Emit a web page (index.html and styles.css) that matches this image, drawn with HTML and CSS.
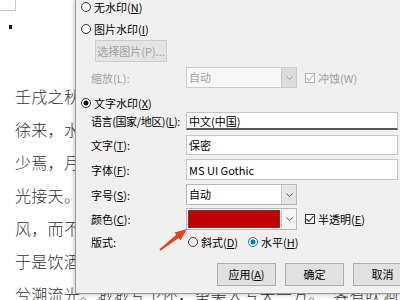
FILE: index.html
```html
<!DOCTYPE html>
<html lang="zh">
<head>
    <meta charset="UTF-8">
    <title>水印</title>
    <link rel="stylesheet" href="styles.css">
</head>
<body>
    <div class="corner"></div>
    <div class="bullet"></div>
    <div class="doc">
        <p>壬戌之秋，七月既望，苏子与客泛舟游于赤壁之下。清</p>
        <p>徐来，水波不兴。举酒属客，诵明月之诗，歌窈窕之章。</p>
        <p>少焉，月出于东山之上，徘徊于斗牛之间。白露横江，水</p>
        <p>光接天。纵一苇之所如，凌万顷之茫然。浩浩乎如冯虚御</p>
        <p>风，而不知其所止；飘飘乎如遗世独立，羽化而登仙。</p>
        <p>于是饮酒乐甚，扣舷而歌之。歌曰：“桂棹兮兰桨，击空明</p>
        <p>兮溯流光。渺渺兮予怀，望美人兮天一方。”客有吹洞箫者</p>
    </div>

    <div class="dialog">
        <div class="row opt r-none"><span class="radio"></span>无水印(<u>N</u>)</div>
        <div class="row opt r-pic"><span class="radio"></span>图片水印(<u>I</u>)</div>
        <div class="pic-btn">选择图片(P)...</div>
        <div class="row field r-scale">
            <span class="label off">缩放(L):</span>
            <span class="combo off">
                <span class="combo-val">自动</span>
                <span class="combo-drop"><svg width="7" height="4"><polyline points="0.5,0.5 3.5,3.5 6.5,0.5" fill="none" stroke="#9a9a9a"/></svg></span>
            </span>
            <span class="check off"><svg width="8" height="8"><polyline points="0.5,4 3,6.5 7.5,1" fill="none" stroke="#b0b0b0" stroke-width="1.1"/></svg></span>
            <span class="off">冲蚀(W)</span>
        </div>
        <div class="row opt r-text"><span class="radio on"></span>文字水印(<u>X</u>)</div>
        <div class="row field r-lang">
            <span class="label tight">语言(国家/地区)(<u>L</u>):</span>
            <span class="input lang">中文(中国)</span>
        </div>
        <div class="row field r-word">
            <span class="label">文字(<u>T</u>):</span>
            <span class="input">保密</span>
        </div>
        <div class="row field r-font">
            <span class="label">字体(<u>F</u>):</span>
            <span class="input">MS UI Gothic</span>
        </div>
        <div class="row field r-size">
            <span class="label">字号(<u>S</u>):</span>
            <span class="combo">
                <span class="combo-val">自动</span>
                <span class="combo-drop"><svg width="7" height="4"><polyline points="0.5,0.5 3.5,3.5 6.5,0.5" fill="none" stroke="#555"/></svg></span>
            </span>
        </div>
        <div class="row field r-color">
            <span class="label">颜色(<u>C</u>):</span>
            <span class="combo color">
                <span class="combo-val"></span>
                <span class="combo-drop"><svg width="7" height="4"><polyline points="0.5,0.5 3.5,3.5 6.5,0.5" fill="none" stroke="#555"/></svg></span>
            </span>
            <span class="check"><svg width="8" height="8"><polyline points="0.5,4 3,6.5 7.5,1" fill="none" stroke="#222" stroke-width="1.1"/></svg></span>
            <span>半透明(<u>E</u>)</span>
        </div>
        <div class="row field r-layout">
            <span class="label">版式:</span>
            <span class="radio r-first"></span><span>斜式(<u>D</u>)</span>
            <span class="radio on blue r-second"></span><span>水平(<u>H</u>)</span>
        </div>
        <div class="buttons">
            <span class="btn">应用(<u>A</u>)</span>
            <span class="btn">确定</span>
            <span class="btn">取消</span>
        </div>
    </div>

    <svg class="arrow" width="40" height="32" viewBox="155 224 40 32">
        <polygon points="187,229 180.6,240.3 178.7,238 160.4,250.8 159.4,249.2 176.3,234.8 174.4,232.4" fill="#e8431f"/>
    </svg>
</body>
</html>
```

FILE: styles.css
```css
body {
    margin: 0;
    width: 400px;
    height: 300px;
    overflow: hidden;
    background: #fff;
    position: relative;
    font-family: "Noto Sans CJK SC", "Noto Sans", sans-serif;
}

.corner {
    width: 15px;
    height: 10px;
    border-right: 1px solid #c8c8c8;
    border-bottom: 1px solid #c8c8c8;
}

.bullet {
    width: 3px;
    height: 4px;
    background: #111;
    margin: 14px 0 0 9px;
}

.doc {
    margin-top: 51px;
    padding-left: 15px;
    font-size: 16px;
    line-height: 33px;
    letter-spacing: 0.3px;
    color: #333;
    font-weight: 300;
    white-space: nowrap;
}

.doc p {
    margin: 0;
}

/* dialog */
.dialog {
    position: absolute;
    left: 75px;
    top: -1px;
    width: 345px;
    height: 295px;
    box-sizing: border-box;
    background: #f0f0f0;
    border: 1px solid #999;
    box-shadow: 0 0 5px rgba(0, 0, 0, 0.3);
    font-size: 11px;
    color: #000;
    display: flex;
    flex-direction: column;
    white-space: nowrap;
    overflow: hidden;
}

.row {
    display: flex;
    align-items: center;
}

.opt {
    padding-left: 5px;
    height: 13px;
}

.field {
    padding-left: 15px;
}

.label {
    width: 95px;
    flex: none;
}

.label.tight {
    letter-spacing: -0.4px;
}

.off {
    color: #a0a0a0;
}

u {
    text-decoration: underline;
    text-underline-offset: 1px;
}

.r-pic { margin-top: 9px; }
.r-scale { margin-top: 5px; height: 21px; }
.r-text { margin-top: 8px; }
.r-lang { margin-top: 3px; height: 18px; }
.r-word { margin-top: 5px; height: 20px; }
.r-font { margin-top: 4px; height: 21px; }
.r-size { margin-top: 4px; height: 21px; }
.r-color { margin-top: 3px; height: 22px; }
.r-layout { margin-top: 6px; height: 12px; }

.radio {
    width: 10px;
    height: 10px;
    box-sizing: border-box;
    border: 1px solid #333;
    border-radius: 50%;
    background: #fff;
    margin-right: 3px;
    flex: none;
}

.radio.on {
    background: radial-gradient(circle, #111 0 2.2px, #fff 2.8px);
}

.radio.blue {
    border-color: #0078d7;
    background: radial-gradient(circle, #0078d7 0 2.2px, #fff 2.8px);
}

.r-first { margin-left: 2px; }
.r-second { margin-left: 10px; }

.pic-btn {
    margin: 5px 0 0 19px;
    width: 72px;
    height: 22px;
    box-sizing: border-box;
    border: 1px solid #cdcdcd;
    background: #e4e4e4;
    color: #a0a0a0;
    line-height: 20px;
    text-align: center;
}

.combo {
    width: 111px;
    height: 21px;
    box-sizing: border-box;
    border: 1px solid #b8b8b8;
    background: #fff;
    display: flex;
    flex: none;
}

.combo.off {
    border-color: #cccccc;
    background: #f7f7f7;
}

.r-color .combo {
    height: 22px;
}

.combo-val {
    flex: 1;
    padding-left: 2px;
    line-height: 19px;
}

.color .combo-val {
    margin: 1px;
    border: 1px dotted #555;
    background: #c00000;
}

.combo-drop {
    width: 14px;
    border-left: 1px solid #c8c8c8;
    background: #e6e6e6;
    display: flex;
    align-items: center;
    justify-content: center;
}

.combo.off .combo-drop {
    background: #dcdcdc;
}

.color .combo-drop {
    background: #f4f4f4;
}

.check {
    width: 10px;
    height: 10px;
    box-sizing: border-box;
    border: 1px solid #333;
    background: #fff;
    margin: 0 3px 0 8px;
    display: flex;
    align-items: center;
    justify-content: center;
    flex: none;
}

.check.off {
    border-color: #b0b0b0;
}

.input {
    width: 212px;
    height: 100%;
    box-sizing: border-box;
    border: 1px solid #c4c4c4;
    background: #fff;
    padding-left: 2px;
    display: flex;
    align-items: center;
    flex: none;
}

.input.lang {
    border-bottom: 2px solid #555;
}

.buttons {
    margin-top: 15px;
    padding-left: 141px;
    display: flex;
    gap: 9px;
}

.btn {
    width: 59px;
    height: 23px;
    box-sizing: border-box;
    border: 1px solid #adadad;
    background: #e1e1e1;
    line-height: 21px;
    text-align: center;
    flex: none;
}

.arrow {
    position: absolute;
    left: 155px;
    top: 224px;
}
```
